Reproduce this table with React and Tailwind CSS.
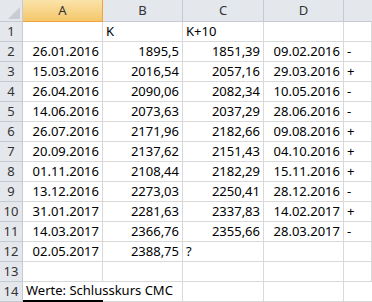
const rows = [
  ['', 'K', 'K+10', '', ''],
  ['26.01.2016', '1895,5', '1851,39', '09.02.2016', '-'],
  ['15.03.2016', '2016,54', '2057,16', '29.03.2016', '+'],
  ['26.04.2016', '2090,06', '2082,34', '10.05.2016', '-'],
  ['14.06.2016', '2073,63', '2037,29', '28.06.2016', '-'],
  ['26.07.2016', '2171,96', '2182,66', '09.08.2016', '+'],
  ['20.09.2016', '2137,62', '2151,43', '04.10.2016', '+'],
  ['01.11.2016', '2108,44', '2182,29', '15.11.2016', '+'],
  ['13.12.2016', '2273,03', '2250,41', '28.12.2016', '-'],
  ['31.01.2017', '2281,63', '2337,83', '14.02.2017', '+'],
  ['14.03.2017', '2366,76', '2355,66', '28.03.2017', '-'],
  ['02.05.2017', '2388,75', '?', '', ''],
  ['', '', '', '', ''],
]

const widths = ['w-[80px]', 'w-[80px]', 'w-[81px]', 'w-[80px]', 'flex-1']

function Cell({ i, value, row }) {
  // text columns in row 1, the "?" and the +/- column are left aligned
  const left = row === 0 || i === 4 || value === '?'
  return (
    <div
      className={`${widths[i]} h-full border-r border-b border-[#d9d9d9] flex items-center px-[3px] whitespace-nowrap ${
        left ? 'justify-start' : 'justify-end'
      }`}
    >
      {value}
    </div>
  )
}

function RowHead({ n }) {
  return (
    <div className="w-[23px] h-full shrink-0 bg-[#e4e7ec] border-r border-b border-[#c6cbd3] flex items-center justify-center text-[#333]">
      {n}
    </div>
  )
}

export default function App() {
  return (
    <div
      className="w-[372px] h-[302px] overflow-hidden bg-white text-[13px] text-black"
      style={{ fontFamily: '"Noto Sans", "Open Sans", sans-serif' }}
    >
      <div className="flex h-[22px]">
        <div className="w-[23px] shrink-0 bg-[#e4e7ec] border-r border-b border-[#c6cbd3] relative">
          <div className="absolute right-[2px] bottom-[2px] w-0 h-0 border-l-[12px] border-l-transparent border-b-[12px] border-b-[#c9ccd1]" />
        </div>
        <div className="w-[80px] bg-gradient-to-b from-[#fae3a8] to-[#f4c76a] border-r border-b border-[#f2a23c] flex items-center justify-center text-[#333]">
          A
        </div>
        {['B', 'C', 'D'].map((l, i) => (
          <div
            key={l}
            className={`${widths[i + 1]} bg-[#e4e7ec] border-r border-b border-[#c6cbd3] flex items-center justify-center text-[#333]`}
          >
            {l}
          </div>
        ))}
        <div className="flex-1 bg-[#e4e7ec] border-b border-[#c6cbd3]" />
      </div>

      {rows.map((r, ri) => (
        <div key={ri} className="flex h-[20px]">
          <RowHead n={ri + 1} />
          {r.map((v, i) => (
            <Cell key={i} i={i} value={v} row={ri} />
          ))}
        </div>
      ))}

      <div className="flex h-[20px]">
        <RowHead n={14} />
        <div className="w-[80px] h-full border-b-2 border-black flex items-center px-[3px] whitespace-nowrap overflow-visible relative z-10">
          Werte: Schlusskurs CMC
        </div>
        <div className="w-[80px] h-full border-r border-b border-[#d9d9d9]" />
        <div className="w-[81px] h-full border-r border-b border-[#d9d9d9]" />
        <div className="w-[80px] h-full border-r border-b border-[#d9d9d9]" />
        <div className="flex-1 h-full border-b border-[#d9d9d9]" />
      </div>
    </div>
  )
}
